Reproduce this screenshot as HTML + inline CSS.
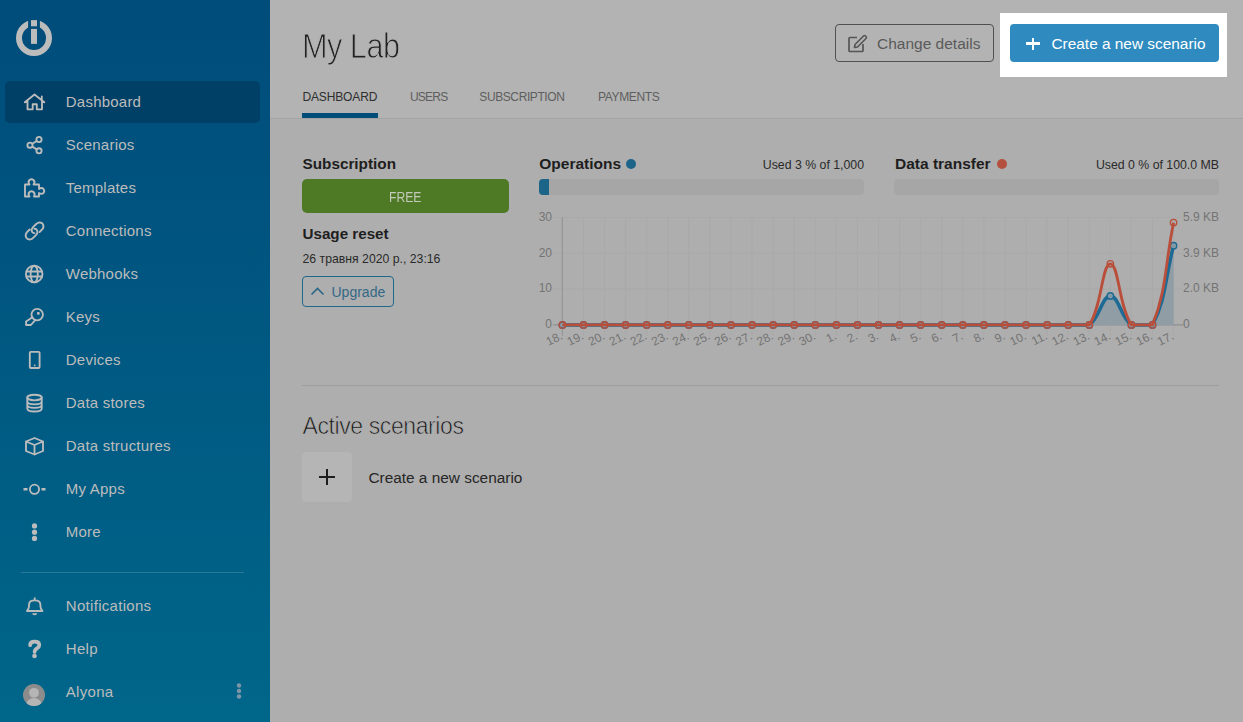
<!DOCTYPE html>
<html><head><meta charset="utf-8"><style>
html,body{margin:0;padding:0;}
body{width:1243px;height:722px;overflow:hidden;position:relative;background:#aeaeae;font-family:"Liberation Sans",sans-serif;}
</style></head><body>
<div style="position:absolute;left:0;top:0;width:270px;height:722px;background:linear-gradient(to bottom,#004c7a,#00668a)"></div>
<div style="position:absolute;left:5px;top:81px;width:255px;height:42px;border-radius:5px;background:#003f66"></div>
<div style="position:absolute;left:65.8px;top:93.90px;font-size:15px;line-height:15px;color:#bcbcbc;font-weight:400;white-space:nowrap;letter-spacing:0.22px">Dashboard</div>
<div style="position:absolute;left:65.8px;top:136.90px;font-size:15px;line-height:15px;color:#bcbcbc;font-weight:400;white-space:nowrap;letter-spacing:0.22px">Scenarios</div>
<div style="position:absolute;left:65.8px;top:179.90px;font-size:15px;line-height:15px;color:#bcbcbc;font-weight:400;white-space:nowrap;letter-spacing:0.22px">Templates</div>
<div style="position:absolute;left:65.8px;top:222.90px;font-size:15px;line-height:15px;color:#bcbcbc;font-weight:400;white-space:nowrap;letter-spacing:0.22px">Connections</div>
<div style="position:absolute;left:65.8px;top:265.90px;font-size:15px;line-height:15px;color:#bcbcbc;font-weight:400;white-space:nowrap;letter-spacing:0.22px">Webhooks</div>
<div style="position:absolute;left:65.8px;top:308.90px;font-size:15px;line-height:15px;color:#bcbcbc;font-weight:400;white-space:nowrap;letter-spacing:0.22px">Keys</div>
<div style="position:absolute;left:65.8px;top:351.90px;font-size:15px;line-height:15px;color:#bcbcbc;font-weight:400;white-space:nowrap;letter-spacing:0.22px">Devices</div>
<div style="position:absolute;left:65.8px;top:394.90px;font-size:15px;line-height:15px;color:#bcbcbc;font-weight:400;white-space:nowrap;letter-spacing:0.22px">Data stores</div>
<div style="position:absolute;left:65.8px;top:437.90px;font-size:15px;line-height:15px;color:#bcbcbc;font-weight:400;white-space:nowrap;letter-spacing:0.22px">Data structures</div>
<div style="position:absolute;left:65.8px;top:480.90px;font-size:15px;line-height:15px;color:#bcbcbc;font-weight:400;white-space:nowrap;letter-spacing:0.22px">My Apps</div>
<div style="position:absolute;left:65.8px;top:523.90px;font-size:15px;line-height:15px;color:#bcbcbc;font-weight:400;white-space:nowrap;letter-spacing:0.22px">More</div>
<div style="position:absolute;left:21px;top:572px;width:223px;height:1px;background:#2a7898"></div>
<div style="position:absolute;left:65.8px;top:597.90px;font-size:15px;line-height:15px;color:#bcbcbc;font-weight:400;white-space:nowrap;letter-spacing:0.3px">Notifications</div>
<div style="position:absolute;left:65.8px;top:640.90px;font-size:15px;line-height:15px;color:#bcbcbc;font-weight:400;white-space:nowrap;letter-spacing:0.3px">Help</div>
<div style="position:absolute;left:65.8px;top:683.90px;font-size:15px;line-height:15px;color:#bcbcbc;font-weight:400;white-space:nowrap;letter-spacing:0.3px">Alyona</div>
<svg width="270" height="722" style="position:absolute;left:0;top:0"><path d="M24.8,102.3 L34.5,94.5 L44.3,102.3 M27.5,100.5 V109.3 H32.7 V104.2 H36.8 V109.3 H42 V100.5 M41.8,96.5 V99.8" stroke="#bcbcbc" fill="none" stroke-width="1.85" stroke-linecap="round" stroke-linejoin="round"/><circle cx="39" cy="139.5" r="2.6" stroke="#bcbcbc" fill="none" stroke-width="1.85" stroke-linecap="round" stroke-linejoin="round"/><circle cx="30" cy="145.2" r="2.6" stroke="#bcbcbc" fill="none" stroke-width="1.85" stroke-linecap="round" stroke-linejoin="round"/><circle cx="39" cy="150.8" r="2.6" stroke="#bcbcbc" fill="none" stroke-width="1.85" stroke-linecap="round" stroke-linejoin="round"/><path d="M32.3,143.8 L36.7,141 M32.3,146.6 L36.7,149.4" stroke="#bcbcbc" fill="none" stroke-width="1.85" stroke-linecap="round" stroke-linejoin="round"/><path d="M25,188.5 H29.5 Q27.5,186 29.5,184 Q31.5,182.5 33.5,184 Q35.5,186 33.5,188.5 H39 V193 Q41.5,191 43.5,193 Q45,195 43.5,197 Q41.5,198.5 39,197 V200.5 H34 Q35.5,198 33.5,196 Q31.5,194.5 29.5,196 Q27.5,198 29.5,200.5 H25 Z" stroke="#bcbcbc" fill="none" stroke-width="1.85" stroke-linecap="round" stroke-linejoin="round" transform="translate(0,-4)"/><path d="M39.6,232 L42.2,229.4 Q44.3,227 43,224.3 Q41.5,222 38.6,222.6 Q37.2,223 36.2,224 L32.6,227.6 Q30.9,229.6 32,231.8 Q32.8,233.2 34.4,233.1 M29.6,229.5 L27,232.2 Q24.9,234.6 26.1,237.4 Q27.5,239.9 30.4,239.4 Q31.9,239.1 32.9,238.1 L36.4,234.6 Q38.1,232.5 37.1,230.3 Q36.3,228.7 34.4,228.8" stroke="#bcbcbc" fill="none" stroke-width="1.85" stroke-linecap="round" stroke-linejoin="round" stroke-width="2.1"/><circle cx="34.2" cy="274" r="8.3" stroke="#bcbcbc" fill="none" stroke-width="1.85" stroke-linecap="round" stroke-linejoin="round"/><ellipse cx="34.2" cy="274" rx="3.6" ry="8.3" stroke="#bcbcbc" fill="none" stroke-width="1.85" stroke-linecap="round" stroke-linejoin="round"/><path d="M26.5,271.5 H42 M26.5,276.5 H42" stroke="#bcbcbc" fill="none" stroke-width="1.85" stroke-linecap="round" stroke-linejoin="round"/><circle cx="37.2" cy="314.6" r="5.75" stroke="#bcbcbc" fill="none" stroke-width="1.85" stroke-linecap="round" stroke-linejoin="round"/><path d="M32.4,317.2 L26.1,321.4 V325 H30.9 L35,320.4" stroke="#bcbcbc" fill="none" stroke-width="1.85" stroke-linecap="round" stroke-linejoin="round"/><rect x="37" y="312" width="2.7" height="2.7" rx="0.8" fill="#bcbcbc"/><rect x="29.8" y="351.8" width="9.8" height="16.2" rx="1" stroke="#bcbcbc" fill="none" stroke-width="1.85" stroke-linecap="round" stroke-linejoin="round"/><circle cx="34.7" cy="365.4" r="0.9" fill="#bcbcbc"/><ellipse cx="34.5" cy="397.5" rx="7.2" ry="2.8" stroke="#bcbcbc" fill="none" stroke-width="1.85" stroke-linecap="round" stroke-linejoin="round"/><path d="M27.3,397.5 V408.5 Q27.3,411.5 34.5,411.5 Q41.7,411.5 41.7,408.5 V397.5 M27.3,401.5 Q27.3,404.3 34.5,404.3 Q41.7,404.3 41.7,401.5 M27.3,405 Q27.3,407.8 34.5,407.8 Q41.7,407.8 41.7,405" stroke="#bcbcbc" fill="none" stroke-width="1.85" stroke-linecap="round" stroke-linejoin="round"/><path d="M34.5,438 L43,441.5 V451 L34.5,454.5 L26,451 V441.5 Z M26,441.5 L34.5,445 L43,441.5 M34.5,445 V454.5" stroke="#bcbcbc" fill="none" stroke-width="1.85" stroke-linecap="round" stroke-linejoin="round"/><circle cx="34.5" cy="489.3" r="4.6" stroke="#bcbcbc" fill="none" stroke-width="1.85" stroke-linecap="round" stroke-linejoin="round" stroke-width="1.8"/><path d="M23.5,489.3 H27.5 M41.5,489.3 H45.5" stroke="#bcbcbc" stroke-width="2.4"/><circle cx="34.5" cy="525.9" r="2.6" fill="#bcbcbc"/><circle cx="34.5" cy="532.2" r="2.6" fill="#bcbcbc"/><circle cx="34.5" cy="538.4" r="2.6" fill="#bcbcbc"/><path d="M27,611 H42.4 Q40.4,609 40.4,606 V604.8 Q40.4,600.4 34.7,600.4 Q29,600.4 29,604.8 V606 Q29,609 27,611 Z M34.7,598.2 V600" stroke="#bcbcbc" fill="none" stroke-width="1.85" stroke-linecap="round" stroke-linejoin="round"/><path d="M32.2,613.3 H37.2 A2.5,2 0 0 1 32.2,613.3 Z" fill="#bcbcbc"/><path d="M30.1,645.2 Q30.1,641.6 34.7,641.6 Q39.3,641.6 39.3,645 Q39.3,647 37,648.4 Q34.6,649.7 34.6,652" stroke="#bcbcbc" fill="none" stroke-width="3.7" stroke-linecap="round" stroke-linejoin="round"/><circle cx="34.5" cy="656" r="2.35" fill="#bcbcbc"/><defs><clipPath id="avc"><circle cx="34" cy="695" r="11"/></clipPath></defs><circle cx="34" cy="695" r="11" fill="#8c8c8c"/><g clip-path="url(#avc)" fill="#b5b5b5"><circle cx="34" cy="692.8" r="4.9"/><ellipse cx="34" cy="705.5" rx="8" ry="7.6"/></g><circle cx="239" cy="685.5" r="2.2" fill="#7d97a8"/><circle cx="239" cy="691" r="2.2" fill="#7d97a8"/><circle cx="239" cy="696.5" r="2.2" fill="#7d97a8"/><defs><mask id="lgm"><rect x="0" y="0" width="70" height="70" fill="#fff"/><rect x="28.1" y="10" width="11.8" height="20" fill="#000"/></mask></defs><circle cx="34" cy="38" r="15" stroke="#bcbcbc" stroke-width="6" fill="none" mask="url(#lgm)"/><rect x="31" y="20.1" width="6" height="6.2" fill="#bcbcbc"/><rect x="31" y="28.9" width="6" height="15" fill="#bcbcbc"/></svg>
<div style="position:absolute;left:270px;top:0;width:973px;height:118px;background:#b3b3b3"></div>
<div style="position:absolute;left:301.8px;top:27.67px;font-size:35px;line-height:35px;color:#222;font-weight:400;white-space:nowrap;letter-spacing:-0.6px;-webkit-text-stroke:1px #b3b3b3;transform:scaleX(0.877);transform-origin:0 0">My Lab</div>
<div style="position:absolute;left:302.5px;top:90.74px;font-size:12px;line-height:12px;color:#2e2e2e;font-weight:400;white-space:nowrap;letter-spacing:-0.15px">DASHBOARD</div>
<div style="position:absolute;left:410px;top:90.74px;font-size:12px;line-height:12px;color:#5e5e5e;font-weight:400;white-space:nowrap;letter-spacing:-0.8px">USERS</div>
<div style="position:absolute;left:479.3px;top:90.74px;font-size:12px;line-height:12px;color:#5e5e5e;font-weight:400;white-space:nowrap;letter-spacing:-0.4px">SUBSCRIPTION</div>
<div style="position:absolute;left:598px;top:90.74px;font-size:12px;line-height:12px;color:#5e5e5e;font-weight:400;white-space:nowrap;letter-spacing:-0.35px">PAYMENTS</div>
<div style="position:absolute;left:302px;top:113px;width:76px;height:5px;background:#004d7a"></div>
<div style="position:absolute;left:270px;top:118px;width:973px;height:1px;background:#a3a3a3"></div>
<div style="position:absolute;left:835px;top:24px;width:157px;height:36px;border:1px solid #505050;border-radius:4px"></div>
<svg width="30" height="30" style="position:absolute;left:845px;top:32px"><path d="M12,5.5 H5 Q4,5.5 4,6.5 V18.5 Q4,19.5 5,19.5 H17 Q18,19.5 18,18.5 V12" stroke="#555" stroke-width="1.7" fill="none"/><path d="M9.5,15.5 L10,12.5 L18.5,4 Q19.5,3 20.5,4 L21,4.5 Q22,5.5 21,6.5 L12.5,15 Z" stroke="#555" stroke-width="1.6" fill="none" stroke-linejoin="round"/></svg>
<div style="position:absolute;left:877px;top:35.58px;font-size:15.5px;line-height:15.5px;color:#5a5a5a;font-weight:400;white-space:nowrap;">Change details</div>
<div style="position:absolute;left:1000px;top:13px;width:227px;height:64px;background:#fff"></div>
<div style="position:absolute;left:1010px;top:24px;width:209px;height:38px;border-radius:4px;background:#2f8bbf"></div>
<div style="position:absolute;left:1026px;top:42.3px;width:13.5px;height:2.4px;background:#fff"></div>
<div style="position:absolute;left:1031.6px;top:37.5px;width:2.4px;height:12px;background:#fff"></div>
<div style="position:absolute;left:1051.5px;top:35.76px;font-size:15.4px;line-height:15.4px;color:#fff;font-weight:400;white-space:nowrap;">Create a new scenario</div>
<div style="position:absolute;left:302.5px;top:155.65px;font-size:15.3px;line-height:15.3px;color:#1e1e1e;font-weight:700;white-space:nowrap;">Subscription</div>
<div style="position:absolute;left:302px;top:179px;width:207px;height:34px;border-radius:5px;background:#4e7925"></div>
<div style="position:absolute;left:389.2px;top:189.20px;font-size:15px;line-height:15px;color:#c4cbbb;font-weight:400;white-space:nowrap;transform:scaleX(0.81);transform-origin:0 0">FREE</div>
<div style="position:absolute;left:302.5px;top:226.23px;font-size:15.2px;line-height:15.2px;color:#1e1e1e;font-weight:700;white-space:nowrap;">Usage reset</div>
<div style="position:absolute;left:302.5px;top:253.33px;font-size:12.25px;line-height:12.25px;color:#2a2a2a;font-weight:400;white-space:nowrap;">26 травня 2020 р., 23:16</div>
<div style="position:absolute;left:302px;top:276px;width:90px;height:29px;border:1px solid #1f6889;border-radius:4px"></div>
<svg width="20" height="20" style="position:absolute;left:308px;top:282px"><path d="M3.5,12.5 L9.5,6.5 L15.5,12.5" stroke="#2a6688" stroke-width="1.6" fill="none"/></svg>
<div style="position:absolute;left:331.5px;top:285.15px;font-size:14px;line-height:14px;color:#346886;font-weight:400;white-space:nowrap;">Upgrade</div>
<div style="position:absolute;left:539.3px;top:155.68px;font-size:15.5px;line-height:15.5px;color:#1e1e1e;font-weight:700;white-space:nowrap;">Operations</div>
<div style="position:absolute;left:626px;top:159px;width:10px;height:10px;border-radius:50%;background:#1d6489"></div>
<div style="position:absolute;right:379px;top:158.59px;font-size:12.3px;line-height:12.3px;color:#2a2a2a;font-weight:400;white-space:nowrap;">Used 3 % of 1,000</div>
<div style="position:absolute;left:539px;top:179px;width:325px;height:16px;border-radius:4px;background:#a6a6a6;overflow:hidden"><div style="width:10px;height:16px;background:#1d6489"></div></div>
<div style="position:absolute;left:895px;top:155.68px;font-size:15.5px;line-height:15.5px;color:#1e1e1e;font-weight:700;white-space:nowrap;">Data transfer</div>
<div style="position:absolute;left:997px;top:159px;width:10px;height:10px;border-radius:50%;background:#b4503e"></div>
<div style="position:absolute;right:24px;top:158.59px;font-size:12.3px;line-height:12.3px;color:#2a2a2a;font-weight:400;white-space:nowrap;">Used 0 % of 100.0 MB</div>
<div style="position:absolute;left:894px;top:179px;width:325px;height:16px;border-radius:4px;background:#a6a6a6"></div>
<svg width="1243" height="722" style="position:absolute;left:0;top:0">
<line x1="553" y1="217.5" x2="1183" y2="217.5" stroke="#a9a9a9" stroke-width="1"/>
<line x1="553" y1="253.3" x2="1183" y2="253.3" stroke="#a9a9a9" stroke-width="1"/>
<line x1="553" y1="289.1" x2="1183" y2="289.1" stroke="#a9a9a9" stroke-width="1"/>
<line x1="553" y1="324.9" x2="1183" y2="324.9" stroke="#a9a9a9" stroke-width="1"/>
<line x1="562.4" y1="217.5" x2="562.4" y2="335.5" stroke="#969696" stroke-width="1"/>
<line x1="583.5" y1="217.5" x2="583.5" y2="335.5" stroke="#a9a9a9" stroke-width="1"/>
<line x1="604.5" y1="217.5" x2="604.5" y2="335.5" stroke="#a9a9a9" stroke-width="1"/>
<line x1="625.6" y1="217.5" x2="625.6" y2="335.5" stroke="#a9a9a9" stroke-width="1"/>
<line x1="646.7" y1="217.5" x2="646.7" y2="335.5" stroke="#a9a9a9" stroke-width="1"/>
<line x1="667.8" y1="217.5" x2="667.8" y2="335.5" stroke="#a9a9a9" stroke-width="1"/>
<line x1="688.8" y1="217.5" x2="688.8" y2="335.5" stroke="#a9a9a9" stroke-width="1"/>
<line x1="709.9" y1="217.5" x2="709.9" y2="335.5" stroke="#a9a9a9" stroke-width="1"/>
<line x1="731.0" y1="217.5" x2="731.0" y2="335.5" stroke="#a9a9a9" stroke-width="1"/>
<line x1="752.1" y1="217.5" x2="752.1" y2="335.5" stroke="#a9a9a9" stroke-width="1"/>
<line x1="773.1" y1="217.5" x2="773.1" y2="335.5" stroke="#a9a9a9" stroke-width="1"/>
<line x1="794.2" y1="217.5" x2="794.2" y2="335.5" stroke="#a9a9a9" stroke-width="1"/>
<line x1="815.3" y1="217.5" x2="815.3" y2="335.5" stroke="#a9a9a9" stroke-width="1"/>
<line x1="836.4" y1="217.5" x2="836.4" y2="335.5" stroke="#a9a9a9" stroke-width="1"/>
<line x1="857.5" y1="217.5" x2="857.5" y2="335.5" stroke="#a9a9a9" stroke-width="1"/>
<line x1="878.5" y1="217.5" x2="878.5" y2="335.5" stroke="#a9a9a9" stroke-width="1"/>
<line x1="899.6" y1="217.5" x2="899.6" y2="335.5" stroke="#a9a9a9" stroke-width="1"/>
<line x1="920.7" y1="217.5" x2="920.7" y2="335.5" stroke="#a9a9a9" stroke-width="1"/>
<line x1="941.8" y1="217.5" x2="941.8" y2="335.5" stroke="#a9a9a9" stroke-width="1"/>
<line x1="962.8" y1="217.5" x2="962.8" y2="335.5" stroke="#a9a9a9" stroke-width="1"/>
<line x1="983.9" y1="217.5" x2="983.9" y2="335.5" stroke="#a9a9a9" stroke-width="1"/>
<line x1="1005.0" y1="217.5" x2="1005.0" y2="335.5" stroke="#a9a9a9" stroke-width="1"/>
<line x1="1026.0" y1="217.5" x2="1026.0" y2="335.5" stroke="#a9a9a9" stroke-width="1"/>
<line x1="1047.1" y1="217.5" x2="1047.1" y2="335.5" stroke="#a9a9a9" stroke-width="1"/>
<line x1="1068.2" y1="217.5" x2="1068.2" y2="335.5" stroke="#a9a9a9" stroke-width="1"/>
<line x1="1089.3" y1="217.5" x2="1089.3" y2="335.5" stroke="#a9a9a9" stroke-width="1"/>
<line x1="1110.3" y1="217.5" x2="1110.3" y2="335.5" stroke="#a9a9a9" stroke-width="1"/>
<line x1="1131.4" y1="217.5" x2="1131.4" y2="335.5" stroke="#a9a9a9" stroke-width="1"/>
<line x1="1152.5" y1="217.5" x2="1152.5" y2="335.5" stroke="#a9a9a9" stroke-width="1"/>
<line x1="1173.6" y1="217.5" x2="1173.6" y2="335.5" stroke="#a9a9a9" stroke-width="1"/>
<line x1="553" y1="324.9" x2="1183" y2="324.9" stroke="#8a8a8a" stroke-width="1"/>
<line x1="562.4" y1="217.5" x2="562.4" y2="335.5" stroke="#969696" stroke-width="1"/>
<path d="M562.40,324.90 C570.83,324.90 575.04,324.90 583.48,324.90 C591.90,324.90 596.12,324.90 604.55,324.90 C612.98,324.90 617.19,324.90 625.62,324.90 C634.05,324.90 638.27,324.90 646.70,324.90 C655.13,324.90 659.34,324.90 667.77,324.90 C676.20,324.90 680.42,324.90 688.85,324.90 C697.28,324.90 701.49,324.90 709.92,324.90 C718.36,324.90 722.57,324.90 731.00,324.90 C739.43,324.90 743.64,324.90 752.07,324.90 C760.50,324.90 764.72,324.90 773.15,324.90 C781.58,324.90 785.79,324.90 794.22,324.90 C802.65,324.90 806.87,324.90 815.30,324.90 C823.73,324.90 827.94,324.90 836.38,324.90 C844.81,324.90 849.02,324.90 857.45,324.90 C865.88,324.90 870.10,324.90 878.52,324.90 C886.95,324.90 891.17,324.90 899.60,324.90 C908.03,324.90 912.24,324.90 920.67,324.90 C929.11,324.90 933.32,324.90 941.75,324.90 C950.18,324.90 954.39,324.90 962.83,324.90 C971.25,324.90 975.47,324.90 983.90,324.90 C992.33,324.90 996.54,324.90 1004.97,324.90 C1013.40,324.90 1017.62,324.90 1026.05,324.90 C1034.48,324.90 1038.69,324.90 1047.12,324.90 C1055.55,324.90 1059.77,324.90 1068.20,324.90 C1076.63,324.90 1083.02,324.90 1089.28,324.90 C1099.88,317.63 1101.92,296.00 1110.35,296.00 C1118.78,296.00 1120.82,317.63 1131.42,324.90 C1137.68,324.90 1149.05,324.90 1152.50,324.90 C1165.91,299.70 1165.14,277.38 1173.57,245.70 L1173.57,324.9 L562.4,324.9 Z" fill="#909da5"/>
<path d="M562.40,324.90 C570.83,324.90 575.04,324.90 583.48,324.90 C591.90,324.90 596.12,324.90 604.55,324.90 C612.98,324.90 617.19,324.90 625.62,324.90 C634.05,324.90 638.27,324.90 646.70,324.90 C655.13,324.90 659.34,324.90 667.77,324.90 C676.20,324.90 680.42,324.90 688.85,324.90 C697.28,324.90 701.49,324.90 709.92,324.90 C718.36,324.90 722.57,324.90 731.00,324.90 C739.43,324.90 743.64,324.90 752.07,324.90 C760.50,324.90 764.72,324.90 773.15,324.90 C781.58,324.90 785.79,324.90 794.22,324.90 C802.65,324.90 806.87,324.90 815.30,324.90 C823.73,324.90 827.94,324.90 836.38,324.90 C844.81,324.90 849.02,324.90 857.45,324.90 C865.88,324.90 870.10,324.90 878.52,324.90 C886.95,324.90 891.17,324.90 899.60,324.90 C908.03,324.90 912.24,324.90 920.67,324.90 C929.11,324.90 933.32,324.90 941.75,324.90 C950.18,324.90 954.39,324.90 962.83,324.90 C971.25,324.90 975.47,324.90 983.90,324.90 C992.33,324.90 996.54,324.90 1004.97,324.90 C1013.40,324.90 1017.62,324.90 1026.05,324.90 C1034.48,324.90 1038.69,324.90 1047.12,324.90 C1055.55,324.90 1059.77,324.90 1068.20,324.90 C1076.63,324.90 1083.02,324.90 1089.28,324.90 C1099.88,317.63 1101.92,296.00 1110.35,296.00 C1118.78,296.00 1120.82,317.63 1131.42,324.90 C1137.68,324.90 1149.05,324.90 1152.50,324.90 C1165.91,299.70 1165.14,277.38 1173.57,245.70" fill="none" stroke="#1d6a94" stroke-width="3.5"/>
<circle cx="562.40" cy="324.90" r="3.2" fill="#8499a6" stroke="#1d6a94" stroke-width="1.4"/>
<circle cx="583.48" cy="324.90" r="3.2" fill="#8499a6" stroke="#1d6a94" stroke-width="1.4"/>
<circle cx="604.55" cy="324.90" r="3.2" fill="#8499a6" stroke="#1d6a94" stroke-width="1.4"/>
<circle cx="625.62" cy="324.90" r="3.2" fill="#8499a6" stroke="#1d6a94" stroke-width="1.4"/>
<circle cx="646.70" cy="324.90" r="3.2" fill="#8499a6" stroke="#1d6a94" stroke-width="1.4"/>
<circle cx="667.77" cy="324.90" r="3.2" fill="#8499a6" stroke="#1d6a94" stroke-width="1.4"/>
<circle cx="688.85" cy="324.90" r="3.2" fill="#8499a6" stroke="#1d6a94" stroke-width="1.4"/>
<circle cx="709.92" cy="324.90" r="3.2" fill="#8499a6" stroke="#1d6a94" stroke-width="1.4"/>
<circle cx="731.00" cy="324.90" r="3.2" fill="#8499a6" stroke="#1d6a94" stroke-width="1.4"/>
<circle cx="752.07" cy="324.90" r="3.2" fill="#8499a6" stroke="#1d6a94" stroke-width="1.4"/>
<circle cx="773.15" cy="324.90" r="3.2" fill="#8499a6" stroke="#1d6a94" stroke-width="1.4"/>
<circle cx="794.22" cy="324.90" r="3.2" fill="#8499a6" stroke="#1d6a94" stroke-width="1.4"/>
<circle cx="815.30" cy="324.90" r="3.2" fill="#8499a6" stroke="#1d6a94" stroke-width="1.4"/>
<circle cx="836.38" cy="324.90" r="3.2" fill="#8499a6" stroke="#1d6a94" stroke-width="1.4"/>
<circle cx="857.45" cy="324.90" r="3.2" fill="#8499a6" stroke="#1d6a94" stroke-width="1.4"/>
<circle cx="878.52" cy="324.90" r="3.2" fill="#8499a6" stroke="#1d6a94" stroke-width="1.4"/>
<circle cx="899.60" cy="324.90" r="3.2" fill="#8499a6" stroke="#1d6a94" stroke-width="1.4"/>
<circle cx="920.67" cy="324.90" r="3.2" fill="#8499a6" stroke="#1d6a94" stroke-width="1.4"/>
<circle cx="941.75" cy="324.90" r="3.2" fill="#8499a6" stroke="#1d6a94" stroke-width="1.4"/>
<circle cx="962.83" cy="324.90" r="3.2" fill="#8499a6" stroke="#1d6a94" stroke-width="1.4"/>
<circle cx="983.90" cy="324.90" r="3.2" fill="#8499a6" stroke="#1d6a94" stroke-width="1.4"/>
<circle cx="1004.97" cy="324.90" r="3.2" fill="#8499a6" stroke="#1d6a94" stroke-width="1.4"/>
<circle cx="1026.05" cy="324.90" r="3.2" fill="#8499a6" stroke="#1d6a94" stroke-width="1.4"/>
<circle cx="1047.12" cy="324.90" r="3.2" fill="#8499a6" stroke="#1d6a94" stroke-width="1.4"/>
<circle cx="1068.20" cy="324.90" r="3.2" fill="#8499a6" stroke="#1d6a94" stroke-width="1.4"/>
<circle cx="1089.28" cy="324.90" r="3.2" fill="#8499a6" stroke="#1d6a94" stroke-width="1.4"/>
<circle cx="1110.35" cy="296.00" r="3.2" fill="#8499a6" stroke="#1d6a94" stroke-width="1.4"/>
<circle cx="1131.42" cy="324.90" r="3.2" fill="#8499a6" stroke="#1d6a94" stroke-width="1.4"/>
<circle cx="1152.50" cy="324.90" r="3.2" fill="#8499a6" stroke="#1d6a94" stroke-width="1.4"/>
<circle cx="1173.57" cy="245.70" r="3.2" fill="#8499a6" stroke="#1d6a94" stroke-width="1.4"/>
<path d="M562.40,324.90 C570.83,324.90 575.04,324.90 583.48,324.90 C591.90,324.90 596.12,324.90 604.55,324.90 C612.98,324.90 617.19,324.90 625.62,324.90 C634.05,324.90 638.27,324.90 646.70,324.90 C655.13,324.90 659.34,324.90 667.77,324.90 C676.20,324.90 680.42,324.90 688.85,324.90 C697.28,324.90 701.49,324.90 709.92,324.90 C718.36,324.90 722.57,324.90 731.00,324.90 C739.43,324.90 743.64,324.90 752.07,324.90 C760.50,324.90 764.72,324.90 773.15,324.90 C781.58,324.90 785.79,324.90 794.22,324.90 C802.65,324.90 806.87,324.90 815.30,324.90 C823.73,324.90 827.94,324.90 836.38,324.90 C844.81,324.90 849.02,324.90 857.45,324.90 C865.88,324.90 870.10,324.90 878.52,324.90 C886.95,324.90 891.17,324.90 899.60,324.90 C908.03,324.90 912.24,324.90 920.67,324.90 C929.11,324.90 933.32,324.90 941.75,324.90 C950.18,324.90 954.39,324.90 962.83,324.90 C971.25,324.90 975.47,324.90 983.90,324.90 C992.33,324.90 996.54,324.90 1004.97,324.90 C1013.40,324.90 1017.62,324.90 1026.05,324.90 C1034.48,324.90 1038.69,324.90 1047.12,324.90 C1055.55,324.90 1059.77,324.90 1068.20,324.90 C1076.63,324.90 1085.13,324.90 1089.28,324.90 C1101.99,306.47 1101.92,263.80 1110.35,263.80 C1118.78,263.80 1118.71,306.47 1131.42,324.90 C1135.57,324.90 1149.67,324.90 1152.50,324.90 C1166.53,290.85 1165.14,263.52 1173.57,222.60" fill="none" stroke="#b94f3b" stroke-width="2.8"/>
<circle cx="562.40" cy="324.90" r="3.2" fill="none" stroke="#b94f3b" stroke-width="1.4"/>
<circle cx="583.48" cy="324.90" r="3.2" fill="none" stroke="#b94f3b" stroke-width="1.4"/>
<circle cx="604.55" cy="324.90" r="3.2" fill="none" stroke="#b94f3b" stroke-width="1.4"/>
<circle cx="625.62" cy="324.90" r="3.2" fill="none" stroke="#b94f3b" stroke-width="1.4"/>
<circle cx="646.70" cy="324.90" r="3.2" fill="none" stroke="#b94f3b" stroke-width="1.4"/>
<circle cx="667.77" cy="324.90" r="3.2" fill="none" stroke="#b94f3b" stroke-width="1.4"/>
<circle cx="688.85" cy="324.90" r="3.2" fill="none" stroke="#b94f3b" stroke-width="1.4"/>
<circle cx="709.92" cy="324.90" r="3.2" fill="none" stroke="#b94f3b" stroke-width="1.4"/>
<circle cx="731.00" cy="324.90" r="3.2" fill="none" stroke="#b94f3b" stroke-width="1.4"/>
<circle cx="752.07" cy="324.90" r="3.2" fill="none" stroke="#b94f3b" stroke-width="1.4"/>
<circle cx="773.15" cy="324.90" r="3.2" fill="none" stroke="#b94f3b" stroke-width="1.4"/>
<circle cx="794.22" cy="324.90" r="3.2" fill="none" stroke="#b94f3b" stroke-width="1.4"/>
<circle cx="815.30" cy="324.90" r="3.2" fill="none" stroke="#b94f3b" stroke-width="1.4"/>
<circle cx="836.38" cy="324.90" r="3.2" fill="none" stroke="#b94f3b" stroke-width="1.4"/>
<circle cx="857.45" cy="324.90" r="3.2" fill="none" stroke="#b94f3b" stroke-width="1.4"/>
<circle cx="878.52" cy="324.90" r="3.2" fill="none" stroke="#b94f3b" stroke-width="1.4"/>
<circle cx="899.60" cy="324.90" r="3.2" fill="none" stroke="#b94f3b" stroke-width="1.4"/>
<circle cx="920.67" cy="324.90" r="3.2" fill="none" stroke="#b94f3b" stroke-width="1.4"/>
<circle cx="941.75" cy="324.90" r="3.2" fill="none" stroke="#b94f3b" stroke-width="1.4"/>
<circle cx="962.83" cy="324.90" r="3.2" fill="none" stroke="#b94f3b" stroke-width="1.4"/>
<circle cx="983.90" cy="324.90" r="3.2" fill="none" stroke="#b94f3b" stroke-width="1.4"/>
<circle cx="1004.97" cy="324.90" r="3.2" fill="none" stroke="#b94f3b" stroke-width="1.4"/>
<circle cx="1026.05" cy="324.90" r="3.2" fill="none" stroke="#b94f3b" stroke-width="1.4"/>
<circle cx="1047.12" cy="324.90" r="3.2" fill="none" stroke="#b94f3b" stroke-width="1.4"/>
<circle cx="1068.20" cy="324.90" r="3.2" fill="none" stroke="#b94f3b" stroke-width="1.4"/>
<circle cx="1089.28" cy="324.90" r="3.2" fill="none" stroke="#b94f3b" stroke-width="1.4"/>
<circle cx="1110.35" cy="263.80" r="3.2" fill="none" stroke="#b94f3b" stroke-width="1.4"/>
<circle cx="1131.42" cy="324.90" r="3.2" fill="none" stroke="#b94f3b" stroke-width="1.4"/>
<circle cx="1152.50" cy="324.90" r="3.2" fill="none" stroke="#b94f3b" stroke-width="1.4"/>
<circle cx="1173.57" cy="222.60" r="3.2" fill="none" stroke="#b94f3b" stroke-width="1.4"/>
<text x="552" y="220.7" text-anchor="end" font-family="Liberation Sans" font-size="12" fill="#747474">30</text>
<text x="552" y="256.5" text-anchor="end" font-family="Liberation Sans" font-size="12" fill="#747474">20</text>
<text x="552" y="292.3" text-anchor="end" font-family="Liberation Sans" font-size="12" fill="#747474">10</text>
<text x="552" y="328.1" text-anchor="end" font-family="Liberation Sans" font-size="12" fill="#747474">0</text>
<text x="1183" y="220.7" font-family="Liberation Sans" font-size="12" fill="#747474">5.9 KB</text>
<text x="1183" y="256.5" font-family="Liberation Sans" font-size="12" fill="#747474">3.9 KB</text>
<text x="1183" y="292.3" font-family="Liberation Sans" font-size="12" fill="#747474">2.0 KB</text>
<text x="1183" y="328.1" font-family="Liberation Sans" font-size="12" fill="#747474">0</text>
<text x="0" y="0" transform="translate(563.50,338.6) rotate(-26)" text-anchor="end" font-family="Liberation Sans" font-size="12" fill="#747474">18.</text>
<text x="0" y="0" transform="translate(584.58,338.6) rotate(-26)" text-anchor="end" font-family="Liberation Sans" font-size="12" fill="#747474">19.</text>
<text x="0" y="0" transform="translate(605.65,338.6) rotate(-26)" text-anchor="end" font-family="Liberation Sans" font-size="12" fill="#747474">20.</text>
<text x="0" y="0" transform="translate(626.73,338.6) rotate(-26)" text-anchor="end" font-family="Liberation Sans" font-size="12" fill="#747474">21.</text>
<text x="0" y="0" transform="translate(647.80,338.6) rotate(-26)" text-anchor="end" font-family="Liberation Sans" font-size="12" fill="#747474">22.</text>
<text x="0" y="0" transform="translate(668.88,338.6) rotate(-26)" text-anchor="end" font-family="Liberation Sans" font-size="12" fill="#747474">23.</text>
<text x="0" y="0" transform="translate(689.95,338.6) rotate(-26)" text-anchor="end" font-family="Liberation Sans" font-size="12" fill="#747474">24.</text>
<text x="0" y="0" transform="translate(711.02,338.6) rotate(-26)" text-anchor="end" font-family="Liberation Sans" font-size="12" fill="#747474">25.</text>
<text x="0" y="0" transform="translate(732.10,338.6) rotate(-26)" text-anchor="end" font-family="Liberation Sans" font-size="12" fill="#747474">26.</text>
<text x="0" y="0" transform="translate(753.17,338.6) rotate(-26)" text-anchor="end" font-family="Liberation Sans" font-size="12" fill="#747474">27.</text>
<text x="0" y="0" transform="translate(774.25,338.6) rotate(-26)" text-anchor="end" font-family="Liberation Sans" font-size="12" fill="#747474">28.</text>
<text x="0" y="0" transform="translate(795.32,338.6) rotate(-26)" text-anchor="end" font-family="Liberation Sans" font-size="12" fill="#747474">29.</text>
<text x="0" y="0" transform="translate(816.40,338.6) rotate(-26)" text-anchor="end" font-family="Liberation Sans" font-size="12" fill="#747474">30.</text>
<text x="0" y="0" transform="translate(837.48,338.6) rotate(-26)" text-anchor="end" font-family="Liberation Sans" font-size="12" fill="#747474">1.</text>
<text x="0" y="0" transform="translate(858.55,338.6) rotate(-26)" text-anchor="end" font-family="Liberation Sans" font-size="12" fill="#747474">2.</text>
<text x="0" y="0" transform="translate(879.62,338.6) rotate(-26)" text-anchor="end" font-family="Liberation Sans" font-size="12" fill="#747474">3.</text>
<text x="0" y="0" transform="translate(900.70,338.6) rotate(-26)" text-anchor="end" font-family="Liberation Sans" font-size="12" fill="#747474">4.</text>
<text x="0" y="0" transform="translate(921.77,338.6) rotate(-26)" text-anchor="end" font-family="Liberation Sans" font-size="12" fill="#747474">5.</text>
<text x="0" y="0" transform="translate(942.85,338.6) rotate(-26)" text-anchor="end" font-family="Liberation Sans" font-size="12" fill="#747474">6.</text>
<text x="0" y="0" transform="translate(963.93,338.6) rotate(-26)" text-anchor="end" font-family="Liberation Sans" font-size="12" fill="#747474">7.</text>
<text x="0" y="0" transform="translate(985.00,338.6) rotate(-26)" text-anchor="end" font-family="Liberation Sans" font-size="12" fill="#747474">8.</text>
<text x="0" y="0" transform="translate(1006.07,338.6) rotate(-26)" text-anchor="end" font-family="Liberation Sans" font-size="12" fill="#747474">9.</text>
<text x="0" y="0" transform="translate(1027.15,338.6) rotate(-26)" text-anchor="end" font-family="Liberation Sans" font-size="12" fill="#747474">10.</text>
<text x="0" y="0" transform="translate(1048.22,338.6) rotate(-26)" text-anchor="end" font-family="Liberation Sans" font-size="12" fill="#747474">11.</text>
<text x="0" y="0" transform="translate(1069.30,338.6) rotate(-26)" text-anchor="end" font-family="Liberation Sans" font-size="12" fill="#747474">12.</text>
<text x="0" y="0" transform="translate(1090.38,338.6) rotate(-26)" text-anchor="end" font-family="Liberation Sans" font-size="12" fill="#747474">13.</text>
<text x="0" y="0" transform="translate(1111.45,338.6) rotate(-26)" text-anchor="end" font-family="Liberation Sans" font-size="12" fill="#747474">14.</text>
<text x="0" y="0" transform="translate(1132.52,338.6) rotate(-26)" text-anchor="end" font-family="Liberation Sans" font-size="12" fill="#747474">15.</text>
<text x="0" y="0" transform="translate(1153.60,338.6) rotate(-26)" text-anchor="end" font-family="Liberation Sans" font-size="12" fill="#747474">16.</text>
<text x="0" y="0" transform="translate(1174.67,338.6) rotate(-26)" text-anchor="end" font-family="Liberation Sans" font-size="12" fill="#747474">17.</text>
</svg>
<div style="position:absolute;left:302px;top:385px;width:917px;height:1px;background:#9e9e9e"></div>
<div style="position:absolute;left:302.5px;top:414.73px;font-size:23px;line-height:23px;color:#151515;font-weight:400;white-space:nowrap;letter-spacing:-0.4px;-webkit-text-stroke:0.7px #aeaeae">Active scenarios</div>
<div style="position:absolute;left:302px;top:452px;width:50px;height:50px;border-radius:4px;background:#b5b5b5"></div>
<div style="position:absolute;left:319.1px;top:475.5px;width:15.8px;height:2.5px;background:#1e1e1e"></div>
<div style="position:absolute;left:326px;top:468.6px;width:2.4px;height:16.6px;background:#1e1e1e"></div>
<div style="position:absolute;left:368.4px;top:469.96px;font-size:15.4px;line-height:15.4px;color:#262626;font-weight:400;white-space:nowrap;">Create a new scenario</div>
</body></html>
